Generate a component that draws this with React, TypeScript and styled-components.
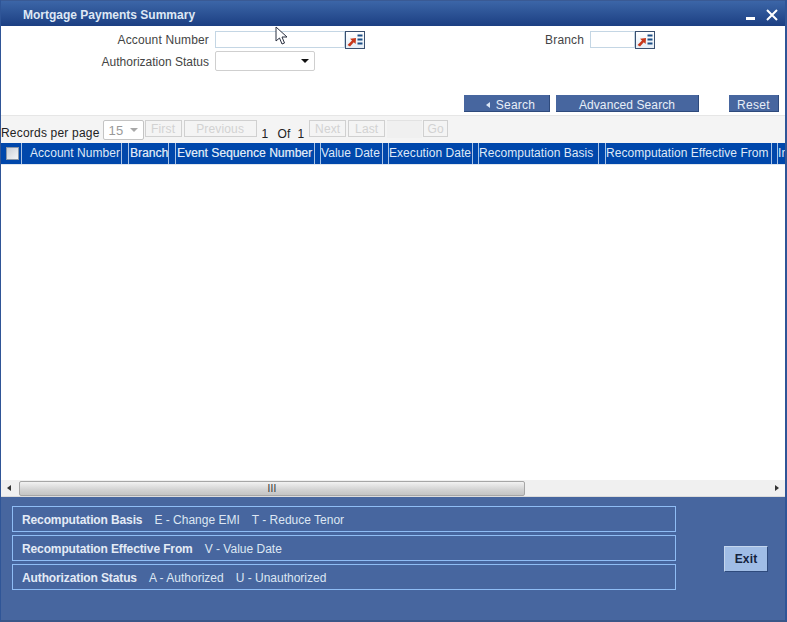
import React, { FC } from "react";
import styled, { createGlobalStyle } from "styled-components";

const GlobalStyle = createGlobalStyle`
  html, body {
    margin: 0;
    padding: 0;
    background: #ffffff;
  }

  body {
    font-family: "Liberation Sans", Arial, sans-serif;
    font-size: 12px;
    letter-spacing: 0.15px;
  }
`;

const COLUMNS = [
  { label: "Account Number", width: 100, indent: 8, gutter: 7 },
  { label: "Branch", width: 40, indent: 1, gutter: 7, ghost: true },
  { label: "Event Sequence Number", width: 139, indent: 1, gutter: 6, ghost: true },
  { label: "Value Date", width: 62, indent: 0, gutter: 6 },
  { label: "Execution Date", width: 84, indent: 0, gutter: 6 },
  { label: "Recomputation Basis", width: 120, indent: 0, gutter: 7 },
  { label: "Recomputation Effective From", width: 166, indent: 0, gutter: 6 },
  { label: "Interest", width: 60, indent: 0, gutter: 6 },
];

const LEGENDS = [
  { title: "Recomputation Basis", items: ["E - Change EMI", "T - Reduce Tenor"] },
  { title: "Recomputation Effective From", items: ["V - Value Date"] },
  { title: "Authorization Status", items: ["A - Authorized", "U - Unauthorized"] },
];

const LookupIcon: FC = () => (
  <svg width="18" height="16" viewBox="0 0 18 16">
    <path d="M1.5 13 L6 8.5 L4 6.8 L10 6 L9.6 12 L7.8 10.2 L4 14.5 Z" fill="#c8391c" />
    <path d="M11.5 2.5h5v2h-5zM11.5 6.5h5v2h-5zM11.5 10.5h5v2h-5z" fill="#1d4f86" />
  </svg>
);

const Cursor: FC = () => (
  <CursorWrap width="14" height="20" viewBox="0 0 14 20">
    <path
      d="M1 1 L1 15 L4.5 12 L7 18 L9.5 17 L7 11 L12 11 Z"
      fill="#ffffff"
      stroke="#2a3040"
      strokeWidth="1"
    />
  </CursorWrap>
);

export default function App() {
  return (
    <Window>
      <GlobalStyle />
      <TitleBar>
        <Title>Mortgage Payments Summary</Title>
        <WindowControls>
          <Minimize />
          <svg width="12" height="12" viewBox="0 0 12 12">
            <path d="M1 1 L11 11 M11 1 L1 11" stroke="#ffffff" strokeWidth="2" />
          </svg>
        </WindowControls>
      </TitleBar>
      <Cursor />

      <SearchForm>
        <FormRow>
          <FieldLabel $width={208}>Account Number</FieldLabel>
          <TextInput $width={130} />
          <LookupButton>
            <LookupIcon />
          </LookupButton>
          <FieldLabel $width={219}>Branch</FieldLabel>
          <TextInput $width={45} />
          <LookupButton>
            <LookupIcon />
          </LookupButton>
        </FormRow>
        <FormRow>
          <FieldLabel $width={208} $tight>
            Authorization Status
          </FieldLabel>
          <SelectBox>
            <Caret />
          </SelectBox>
        </FormRow>
      </SearchForm>

      <ActionRow>
        <ActionButton $width={86} $inset={8} $spacing={0.25}>
          <SearchArrow />
          Search
        </ActionButton>
        <ActionButton $width={143} $spacing={0.1}>
          Advanced Search
        </ActionButton>
        <ActionButton $width={50} $gap={24}>
          Reset
        </ActionButton>
      </ActionRow>

      <Pager>
        <PagerLabel>Records per page</PagerLabel>
        <PageSize>
          15
          <GreyCaret />
        </PageSize>
        <PagerButton $width={37} $gap={1}>
          First
        </PagerButton>
        <PagerButton $width={73}>Previous</PagerButton>
        <PageCount>1</PageCount>
        <PageCount $gap={9}>Of</PageCount>
        <PageCount $gap={7}>1</PageCount>
        <PagerButton $width={37} $gap={5}>
          Next
        </PagerButton>
        <PagerButton $width={37}>Last</PagerButton>
        <PagerBlank />
        <PagerButton $width={25} $gap={1}>
          Go
        </PagerButton>
      </Pager>

      <TableHead>
        <CheckCell>
          <CheckBox />
        </CheckCell>
        {COLUMNS.map((column) => (
          <React.Fragment key={column.label}>
            <HeadCell $width={column.width} $indent={column.indent} $ghost={column.ghost}>
              {column.label}
            </HeadCell>
            <Gutter $width={column.gutter} />
          </React.Fragment>
        ))}
      </TableHead>
      <TableBody />

      <ScrollBar>
        <ScrollArrow $dir="left" />
        <ScrollThumb>
          <Grip>III</Grip>
        </ScrollThumb>
        <ScrollArrow $dir="right" />
      </ScrollBar>

      <Footer>
        <Legends>
          {LEGENDS.map((legend) => (
            <LegendBox key={legend.title}>
              <LegendTitle>{legend.title}</LegendTitle>
              {legend.items.map((item) => (
                <LegendItem key={item}>{item}</LegendItem>
              ))}
            </LegendBox>
          ))}
        </Legends>
        <ExitButton>Exit</ExitButton>
      </Footer>
    </Window>
  );
}

const Window = styled.div`
  position: relative;
  display: flex;
  flex-direction: column;
  box-sizing: border-box;
  width: 787px;
  height: 622px;
  overflow: hidden;
  border-left: 1px solid #2f5597;
  border-right: 2px solid #2f5597;
  border-bottom: 2px solid #3a5688;
  background: #ffffff;
  color: #333333;
`;

const TitleBar = styled.div`
  display: flex;
  align-items: center;
  justify-content: space-between;
  flex: 0 0 26px;
  box-sizing: border-box;
  padding: 3px 7px 0 22px;
  border-top: 1px solid #3a5a94;
  background: linear-gradient(#3c66a8, #1c3f82);
`;

const Title = styled.div`
  font-size: 12px;
  font-weight: bold;
  letter-spacing: 0;
  color: #dfe8f5;
`;

const WindowControls = styled.div`
  display: flex;
  align-items: center;
  gap: 11px;
`;

const Minimize = styled.span`
  width: 9px;
  height: 3px;
  margin-top: 7px;
  background: #ffffff;
`;

const CursorWrap = styled.svg`
  position: absolute;
  top: 26px;
  left: 274px;
`;

const SearchForm = styled.div`
  display: flex;
  flex-direction: column;
  gap: 3px;
  padding-top: 5px;
`;

const FormRow = styled.div`
  display: flex;
  align-items: center;
  height: 17px;

  & + & {
    height: 20px;
  }
`;

const FieldLabel = styled.label<{ $width: number; $tight?: boolean }>`
  flex: 0 0 ${(p) => p.$width}px;
  box-sizing: border-box;
  margin-right: 6px;
  padding-top: ${(p) => (p.$tight ? 1 : 0)}px;
  text-align: right;
  letter-spacing: ${(p) => (p.$tight ? 0 : 0.15)}px;
  color: #444444;
`;

const TextInput = styled.div<{ $width: number }>`
  flex: 0 0 ${(p) => p.$width}px;
  box-sizing: border-box;
  height: 17px;
  border: 1px solid #c4d6e4;
  background: #ffffff;
`;

const LookupButton = styled.div`
  display: flex;
  flex: 0 0 20px;
  align-items: center;
  justify-content: center;
  box-sizing: border-box;
  height: 18px;
  margin-top: 1px;
  border: 1px solid #3a5070;
  background: linear-gradient(#ffffff, #e6eef7);
`;

const SelectBox = styled.div`
  display: flex;
  align-items: center;
  justify-content: flex-end;
  box-sizing: border-box;
  width: 100px;
  height: 20px;
  padding-right: 3px;
  border: 1px solid #cfcfcf;
  border-radius: 2px;
`;

const Caret = styled.span`
  width: 0;
  height: 0;
  margin-right: 2px;
  border-top: 4px solid #111111;
  border-left: 4px solid transparent;
  border-right: 4px solid transparent;
`;

const ActionRow = styled.div`
  display: flex;
  justify-content: flex-end;
  gap: 6px;
  margin-top: 24px;
  padding-right: 6px;
  height: 17px;
`;

const ActionButton = styled.div<{
  $width: number;
  $gap?: number;
  $inset?: number;
  $spacing?: number;
}>`
  display: flex;
  align-items: center;
  justify-content: center;
  gap: 6px;
  box-sizing: border-box;
  width: ${(p) => p.$width}px;
  margin-left: ${(p) => p.$gap ?? 0}px;
  padding: 3px 0 0 ${(p) => p.$inset ?? 0}px;
  background: #47669f;
  border-right: 1px solid #2e4a7c;
  border-bottom: 1px solid #2e4a7c;
  letter-spacing: ${(p) => p.$spacing ?? 0.3}px;
  color: #e8eef8;
`;

const SearchArrow = styled.span`
  width: 0;
  height: 0;
  border-top: 3px solid transparent;
  border-bottom: 3px solid transparent;
  border-right: 4px solid #dbe6f5;
`;

const Pager = styled.div`
  display: flex;
  align-items: flex-start;
  box-sizing: border-box;
  height: 28px;
  margin-top: 3px;
  padding-top: 4px;
  border-top: 1px solid #e6e6e6;
  background: #f4f4f4;
`;

const PagerLabel = styled.span`
  margin-top: 6px;
  letter-spacing: 0.2px;
  color: #222222;
`;

const PageSize = styled.div`
  display: flex;
  align-items: center;
  justify-content: space-between;
  box-sizing: border-box;
  width: 41px;
  height: 20px;
  margin-left: 3px;
  padding: 0 5px;
  border: 1px solid #c4c4c4;
  border-radius: 2px;
  background: #ffffff;
  font-size: 13px;
  color: #999999;
`;

const GreyCaret = styled.span`
  width: 0;
  height: 0;
  border-top: 4px solid #a8a8a8;
  border-left: 4px solid transparent;
  border-right: 4px solid transparent;
`;

const PagerButton = styled.div<{ $width: number; $gap?: number }>`
  display: flex;
  align-items: center;
  justify-content: center;
  box-sizing: border-box;
  width: ${(p) => p.$width}px;
  height: 17px;
  margin-left: ${(p) => p.$gap ?? 2}px;
  border: 1px solid #d0d0d0;
  background: #f4f4f4;
  color: #d2d2d2;
`;

const PageCount = styled.span<{ $gap?: number }>`
  margin-top: 7px;
  margin-left: ${(p) => p.$gap ?? 5}px;
  color: #222222;
`;

const PagerBlank = styled.div`
  box-sizing: border-box;
  width: 35px;
  height: 18px;
  margin-left: 2px;
  border-top: 1px solid #e2e2e2;
  background: #f0f0f0;
`;

const TableHead = styled.div`
  display: flex;
  flex: 0 0 21px;
  overflow: hidden;
  background: #0047ab;
  letter-spacing: 0.05px;
  color: #dfe9f7;
`;

const CheckCell = styled.div`
  display: flex;
  flex: 0 0 21px;
  align-items: center;
  justify-content: center;
  box-sizing: border-box;
  padding-left: 2px;
  border-right: 1px solid #a9c3e6;
`;

const CheckBox = styled.span`
  box-sizing: border-box;
  width: 13px;
  height: 13px;
  border: 1px solid #8a97a8;
  background: linear-gradient(135deg, #c9ced6, #f4f5f7);
`;

const HeadCell = styled.div<{ $width: number; $indent: number; $ghost?: boolean }>`
  flex: 0 0 ${(p) => p.$width}px;
  box-sizing: border-box;
  padding-left: ${(p) => p.$indent}px;
  overflow: hidden;
  line-height: 20px;
  white-space: nowrap;
  border-right: 1px solid #a9c3e6;
  text-shadow: ${(p) => (p.$ghost ? "0.3px 0 #8fabd6" : "none")};
`;

const Gutter = styled.div<{ $width: number }>`
  flex: 0 0 ${(p) => p.$width}px;
  box-sizing: border-box;
  border-right: 1px solid #a9c3e6;
`;

const TableBody = styled.div`
  flex: 1 1 auto;
  border-top: 1px solid #dfe6ee;
  background: #ffffff;
`;

const ScrollBar = styled.div`
  display: flex;
  align-items: center;
  flex: 0 0 16px;
  border-bottom: 1px solid #dcdcdc;
  background: #f0f0f0;
`;

const ScrollArrow = styled.span<{ $dir: "left" | "right" }>`
  flex: 0 0 0;
  width: 0;
  height: 0;
  margin: ${(p) => (p.$dir === "left" ? "0 8px 0 6px" : "0 6px 0 auto")};
  border-top: 3px solid transparent;
  border-bottom: 3px solid transparent;
  border-${(p) => p.$dir === "left" ? "right" : "left"}: 4px solid #333333;
`;

const ScrollThumb = styled.div`
  display: flex;
  align-items: center;
  justify-content: center;
  box-sizing: border-box;
  width: 506px;
  height: 15px;
  border: 1px solid #a6a6a6;
  border-radius: 2px;
  background: linear-gradient(#f2f2f2, #d2d2d2 60%, #c4c4c4);
`;

const Grip = styled.span`
  font-size: 10px;
  color: #333333;
`;

const Footer = styled.div`
  display: flex;
  flex: 0 0 123px;
  align-items: flex-start;
  box-sizing: border-box;
  padding: 9px 0 0 11px;
  background: #47669f;
`;

const Legends = styled.div`
  display: flex;
  flex-direction: column;
  gap: 3px;
`;

const LegendBox = styled.div`
  display: flex;
  align-items: center;
  gap: 12px;
  box-sizing: border-box;
  width: 664px;
  height: 26px;
  padding: 1px 0 0 9px;
  border: 1px solid #8fbdf5;
`;

const LegendTitle = styled.span`
  font-weight: bold;
  letter-spacing: -0.12px;
  color: #e4ebf6;
`;

const LegendItem = styled.span`
  letter-spacing: 0;
  color: #dde6f3;
`;

const ExitButton = styled.div`
  display: flex;
  align-items: center;
  justify-content: center;
  box-sizing: border-box;
  width: 44px;
  height: 26px;
  margin: 40px 0 0 48px;
  border-right: 1px solid #2e4a7c;
  border-bottom: 1px solid #2e4a7c;
  border-top: 1px solid #c4d6ee;
  border-left: 1px solid #c4d6ee;
  background: #a0bde6;
  font-weight: bold;
  color: #14233f;
`;
